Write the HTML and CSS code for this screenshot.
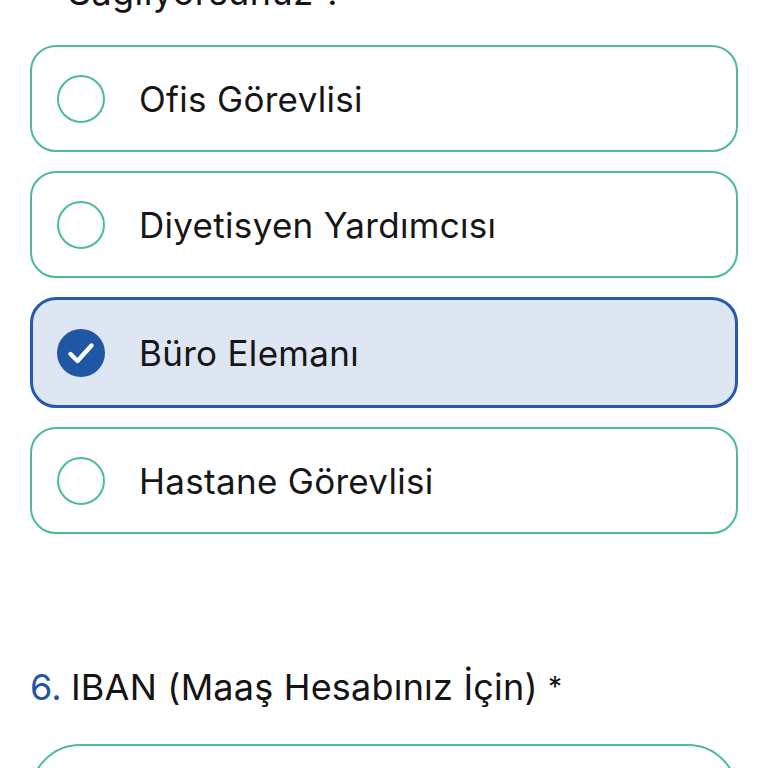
FILE: index.html
```html
<!DOCTYPE html>
<html lang="tr">
<head>
<meta charset="utf-8">
<link rel="stylesheet" href="styles.css">
</head>
<body>
<div class="page">
  <div class="prev-title">Sağlıyorsunuz ?</div>
  <div class="options">
    <div class="option">
      <span class="radio"></span>
      <span class="label">Ofis Görevlisi</span>
    </div>
    <div class="option">
      <span class="radio"></span>
      <span class="label">Diyetisyen Yardımcısı</span>
    </div>
    <div class="option selected">
      <span class="check">
        <svg viewBox="0 0 48 48" width="48" height="48">
          <circle cx="24" cy="24" r="24" fill="#1f56a6"/>
          <path d="M13.5 25 L20.5 32 L34.5 16.5" fill="none" stroke="#fff" stroke-width="4.4" stroke-linecap="round" stroke-linejoin="round"/>
        </svg>
      </span>
      <span class="label">Büro Elemanı</span>
    </div>
    <div class="option">
      <span class="radio"></span>
      <span class="label">Hastane Görevlisi</span>
    </div>
  </div>
  <div class="question">
    <span class="num">6.</span>
    <span class="qtext">IBAN (Maaş Hesabınız İçin) <span class="req">*</span></span>
  </div>
  <div class="input"></div>
</div>
</body>
</html>
```

FILE: styles.css
```css
html, body {
  margin: 0;
  padding: 0;
  background: #ffffff;
}
body {
  font-family: Inter, Roboto, "Noto Sans", Arial, sans-serif;
  color: #141414;
  overflow: hidden;
  height: 768px;
}
.page {
  padding: 0 30px;
}
.prev-title {
  font-size: 36px;
  line-height: 40px;
  letter-spacing: 0.4px;
  margin-top: -28px;
  padding-left: 38px;
  height: 40px;
}
.options {
  display: flex;
  flex-direction: column;
  gap: 19px;
  margin-top: 33px;
}
.option {
  box-sizing: border-box;
  height: 107px;
  border: 2px solid #4dbb99;
  border-radius: 26px;
  display: flex;
  align-items: center;
  padding-left: 25px;
}
.option.selected {
  height: 111px;
  border: 3px solid #265ca6;
  background: #dde6f2;
  padding-left: 24px;
}
.radio {
  box-sizing: border-box;
  width: 48px;
  height: 48px;
  border-radius: 50%;
  border: 2.5px solid #4dbb99;
  flex: none;
}
.check {
  width: 48px;
  height: 48px;
  flex: none;
  display: block;
}
.check svg { display: block; }
.label {
  margin-left: 34px;
  font-size: 35px;
  letter-spacing: 0.3px;
  color: #161616;
}
.question {
  display: flex;
  margin-top: 130px;
  font-size: 36px;
  line-height: 46px;
  letter-spacing: 0.2px;
  color: #141414;
}
.num {
  color: #1f56a6;
  width: 41px;
  flex: none;
}
.req {
  font-size: 28px;
  vertical-align: top;
}
.input {
  box-sizing: border-box;
  margin-top: 34px;
  height: 107px;
  border: 2px solid #4dbb99;
  border-radius: 50px;
}
```
